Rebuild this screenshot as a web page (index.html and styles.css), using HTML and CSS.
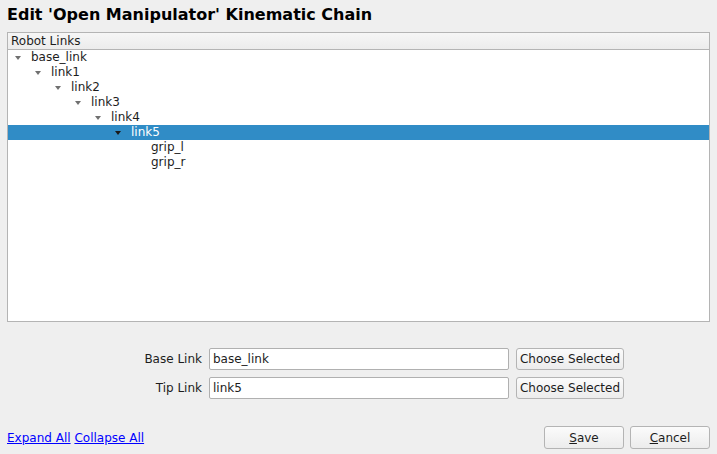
FILE: index.html
```html
<!DOCTYPE html>
<html lang="en">
<head>
    <meta charset="UTF-8">
    <meta name="viewport" content="width=device-width, initial-scale=1.0">
    <title>Edit Kinematic Chain</title>
    <link rel="stylesheet" href="styles.css">
</head>
<body>
    <h1 class="title">Edit 'Open Manipulator' Kinematic Chain</h1>

    <!-- tree of robot links -->
    <div class="tree">
        <div class="tree-header">Robot Links</div>
        <div class="row lv0"><span class="toggle"><span class="arrow"></span></span>base_link</div>
        <div class="row lv1"><span class="toggle"><span class="arrow"></span></span>link1</div>
        <div class="row lv2"><span class="toggle"><span class="arrow"></span></span>link2</div>
        <div class="row lv3"><span class="toggle"><span class="arrow"></span></span>link3</div>
        <div class="row lv4"><span class="toggle"><span class="arrow"></span></span>link4</div>
        <div class="row lv5 selected"><span class="toggle"><span class="arrow"></span></span>link5</div>
        <div class="row lv6"><span class="toggle"></span>grip_l</div>
        <div class="row lv6"><span class="toggle"></span>grip_r</div>
    </div>

    <!-- base / tip selection -->
    <div class="chain-form">
        <label class="field-label" for="baseLink">Base Link</label>
        <input class="field" type="text" id="baseLink" value="base_link">
        <button class="btn" type="button">Choose Selected</button>

        <label class="field-label" for="tipLink">Tip Link</label>
        <input class="field" type="text" id="tipLink" value="link5">
        <button class="btn" type="button">Choose Selected</button>
    </div>

    <div class="footer">
        <div class="links">
            <a href="#">Expand All</a>
            <a href="#">Collapse All</a>
        </div>
        <div class="actions">
            <button class="btn btn-save" type="button"><u>S</u>ave</button>
            <button class="btn btn-cancel" type="button"><u>C</u>ancel</button>
        </div>
    </div>
</body>
</html>
```

FILE: styles.css
```css
body {
    font-family: "DejaVu Sans", sans-serif;
    font-size: 12px;
    color: #1d1d1d;
    background-color: #efefef;
    margin: 0;
    padding: 6px 7px 5px 7px;
}

.title {
    font-size: 16px;
    font-weight: bold;
    line-height: 18px;
    margin: 0 0 8px 0;
    color: #000;
}

.tree {
    height: 288px;
    background-color: #fff;
    border: 1px solid #b4b4b4;
}

.tree-header {
    height: 16px;
    line-height: 16px;
    padding-left: 3px;
    background: linear-gradient(#f6f6f6, #ececec);
    border-bottom: 1px solid #b4b4b4;
}

.row {
    display: flex;
    align-items: center;
    height: 15px;
    line-height: 15px;
    white-space: nowrap;
}

.row.selected {
    background-color: #308cc6;
    color: #fff;
}

.toggle {
    width: 16px;
    height: 15px;
    display: flex;
    align-items: center;
    flex-shrink: 0;
}

.arrow {
    width: 0;
    height: 0;
    margin-top: 1px;
    border-left: 3px solid transparent;
    border-right: 3px solid transparent;
    border-top: 4px solid #707070;
}

.selected .arrow {
    border-top-color: #1a1a1a;
}

.lv0 { padding-left: 7px; }
.lv1 { padding-left: 27px; }
.lv2 { padding-left: 47px; }
.lv3 { padding-left: 67px; }
.lv4 { padding-left: 87px; }
.lv5 { padding-left: 107px; }
.lv6 { padding-left: 127px; }

.chain-form {
    display: grid;
    grid-template-columns: 195px 300px 108px;
    column-gap: 7px;
    row-gap: 7px;
    margin-top: 26px;
}

.field-label {
    text-align: right;
    line-height: 22px;
}

.field {
    height: 22px;
    box-sizing: border-box;
    margin: 0;
    padding: 0 3px;
    font-family: inherit;
    font-size: 12px;
    color: #1d1d1d;
    background-color: #fff;
    border: 1px solid #b0b0b0;
    border-radius: 2px;
    outline: none;
}

.btn {
    height: 22px;
    box-sizing: border-box;
    margin: 0;
    padding: 0 2px;
    white-space: nowrap;
    font-family: inherit;
    font-size: 12px;
    color: #1d1d1d;
    background: linear-gradient(#fbfbfb, #ececec);
    border: 1px solid #b4b4b4;
    border-radius: 3px;
    cursor: pointer;
}

.footer {
    display: flex;
    justify-content: space-between;
    align-items: center;
    margin-top: 27px;
    height: 23px;
}

.links a {
    color: #0000ff;
    text-decoration: underline;
}

.actions {
    display: flex;
    gap: 6px;
}

.btn-save,
.btn-cancel {
    height: 23px;
    width: 80px;
}
```
